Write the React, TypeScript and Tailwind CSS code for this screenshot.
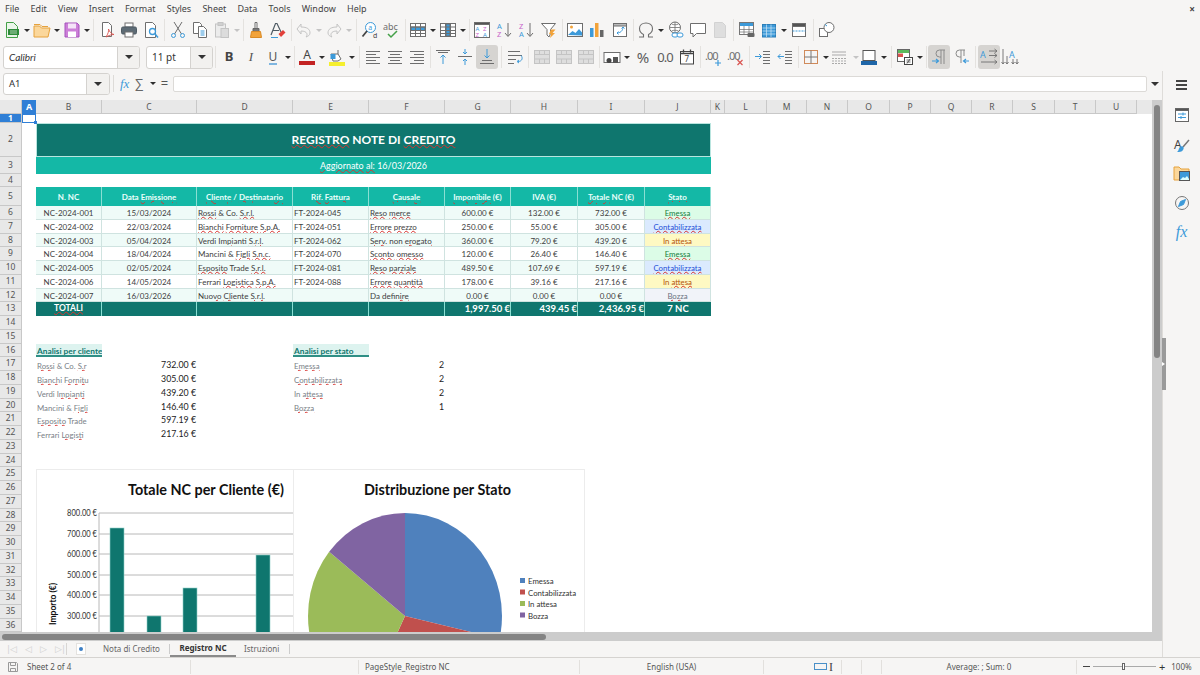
import type { ReactNode } from "react";

const GRAY = "#6e6e6e";
const BLUE = "#3d9ad9";
const LIGHT = "#c4c4c4";

function Ic({ children }: { children: ReactNode }) {
  return (
    <svg width="18" height="18" viewBox="0 0 18 18" fill="none" stroke={GRAY} strokeWidth="1">
      {children}
    </svg>
  );
}

function Btn({ children, active }: { children: ReactNode; active?: boolean }) {
  return (
    <div
      className={`flex h-[24px] w-[22px] shrink-0 items-center justify-center rounded-[3px] ${active ? "bg-[#d6d4d1]" : ""}`}
    >
      {children}
    </div>
  );
}

function Arrow({ light }: { light?: boolean }) {
  return (
    <div className="flex w-[8px] shrink-0 items-center justify-center">
      <div
        className={`h-0 w-0 border-x-[3px] border-t-[3px] border-x-transparent ${light ? "border-t-[#c4c4c4]" : "border-t-[#2e2e2e]"}`}
      />
    </div>
  );
}

function Sep({ className }: { className: string }) {
  return (
    <div className={`flex h-[22px] shrink-0 justify-center ${className}`}>
      <div className="h-full w-px bg-[#e4e2df]" />
    </div>
  );
}

// little horizontal line stacks used by the align + indent icons
function Lines({ rows, x = 2 }: { rows: [number, number][]; x?: number }) {
  return (
    <>
      {rows.map(([y, w]) => (
        <line key={y} x1={x} x2={x + w} y1={y + 0.5} y2={y + 0.5} />
      ))}
    </>
  );
}

function TableIcon({ fill, rowBand }: { fill?: string; rowBand?: boolean }) {
  return (
    <Ic>
      <rect x="1.5" y="2.5" width="15" height="13" fill="#fff" />
      {rowBand ? <rect x="2" y="6" width="14" height="3.5" fill={BLUE} /> : <rect x="7" y="3" width="4" height="12" fill={fill ?? BLUE} />}
      <path d="M1.5 6h15M1.5 9.500h15M1.500 12.500h15M6.500 2.500v13M11.500 2.500v13" />
    </Ic>
  );
}

function Toolbar1() {
  return (
    <div className="flex h-[26px] shrink-0 items-center pl-px">
      <Btn>
        <Ic>
          <path d="M3.500 1.500h7l4 4v11h-11z" fill="#eaf6ea" stroke="#43a047" />
          <rect x="5" y="8" width="11" height="6" fill="#2e8b3a" stroke="none" />
          <path d="M7 10h7M7 12h7" stroke="#fff" strokeWidth=".6" />
        </Ic>
      </Btn>
      <Arrow />
      <Btn>
        <Ic>
          <path d="M1 5h5.500l2 2h8.500l-2 9h-14z" fill="#fbd79b" stroke="#e6a23c" />
          <path d="M1 3.500h6l2 2h6" stroke="#e6a23c" />
        </Ic>
      </Btn>
      <Arrow />
      <Btn>
        <Ic>
          <path d="M2 2h12l2 2v12h-14z" fill="#cc7fd8" stroke="#a652bd" />
          <rect x="5" y="2.500" width="8" height="5" fill="#f5e4f8" stroke="none" />
          <rect x="5" y="10.500" width="8" height="5.500" fill="#fff" stroke="none" />
        </Ic>
      </Btn>
      <Arrow />
      <Sep className="w-[5px]" />
      <Btn>
        <Ic>
          <path d="M4.500 1.500h6l3 3v11h-9z" fill="#fff" />
          <path d="M8 16c2-3 3-6 2.500-8 1 3 3 5 5.500 5.500-3 0-5 1-8 2.500z" stroke="#d9534f" strokeWidth=".9" />
        </Ic>
      </Btn>
      <Btn>
        <Ic>
          <rect x="5" y="2" width="8" height="4" fill="#fff" />
          <rect x="1.500" y="6" width="15" height="7" rx="1.500" fill="#5d6b75" stroke="#4f5b64" />
          <rect x="5" y="11" width="8" height="5" fill="#fff" />
        </Ic>
      </Btn>
      <Btn>
        <Ic>
          <path d="M3.500 1.500h7l3 3v12h-10z" fill="#fff" />
          <circle cx="10.500" cy="10.500" r="3" stroke={BLUE} strokeWidth="1.300" />
          <path d="M13 13l3 3.500" stroke={BLUE} strokeWidth="1.500" />
        </Ic>
      </Btn>
      <Sep className="w-[5px]" />
      <Btn>
        <Ic>
          <path d="M5 1l7.500 12M13 1l-7.500 12" />
          <circle cx="4.500" cy="14.500" r="2" stroke={BLUE} />
          <circle cx="13.500" cy="14.500" r="2" stroke={BLUE} />
        </Ic>
      </Btn>
      <Btn>
        <Ic>
          <path d="M2.500 1.500h6l2 2v9h-8z" fill="#fff" />
          <path d="M7.500 5.500h5l3 3v8h-8z" fill="#fff" />
          <path d="M9.500 10h4M9.500 12h4M9.500 14h4" stroke={BLUE} />
        </Ic>
      </Btn>
      <Btn>
        <Ic>
          <rect x="2.500" y="3" width="10" height="13" fill="#ececec" stroke={LIGHT} />
          <rect x="8" y="7.500" width="7.500" height="9" fill="#dcdcdc" stroke={LIGHT} />
          <rect x="5" y="1.500" width="5" height="3" fill="#d0d0d0" stroke={LIGHT} />
        </Ic>
      </Btn>
      <Arrow light />
      <Sep className="w-[4px]" />
      <Btn>
        <Ic>
          <path d="M8 1.500h2v6H8z" fill="#fff" />
          <path d="M6 7.500h6v3H6z" fill="#777" stroke="#666" />
          <path d="M4.500 10.500h9l1 6h-11z" fill="#f2a33a" stroke="#d98a25" />
        </Ic>
      </Btn>
      <Btn>
        <Ic>
          <path d="M2 14L6.500 2.500h1.500L12 11M4 9.500h6" stroke="#4f5b64" strokeWidth="1.200" />
          <path d="M9.500 13l4.500-4 2.500 2.500-4.500 4.500z" fill="#e2403a" stroke="none" />
          <path d="M2 16.500h7" stroke={BLUE} />
        </Ic>
      </Btn>
      <Sep className="w-[4px]" />
      <Btn>
        <Ic>
          <path d="M2 8l4-5v3c6 0 9 2 9 6 0 2-2 3.500-4 4 2-2 1.500-6-5-6v3z" stroke={LIGHT} />
        </Ic>
      </Btn>
      <Arrow light />
      <Btn>
        <Ic>
          <path d="M16 8l-4-5v3c-6 0-9 2-9 6 0 2 2 3.500 4 4-2-2-1.500-6 5-6v3z" stroke={LIGHT} />
        </Ic>
      </Btn>
      <Arrow light />
      <Sep className="w-[6px]" />
      <Btn>
        <Ic>
          <circle cx="9.500" cy="6.500" r="5" fill="#fff" stroke={BLUE} />
          <path d="M6 10l-4.500 5.500" stroke="#444" strokeWidth="1.800" />
          <text x="7.300" y="8.500" fontSize="7" fill={BLUE} stroke="none" fontFamily="Noto Sans">a</text>
          <text x="12" y="17" fontSize="7" fill="#444" stroke="none" fontFamily="Noto Sans">d</text>
        </Ic>
      </Btn>
      <Btn>
        <Ic>
          <text x="0" y="9" fontSize="9" fill={GRAY} stroke="none" fontFamily="Noto Sans">abc</text>
          <path d="M5 13l3 3 6-6" stroke="#43a047" strokeWidth="1.500" />
        </Ic>
      </Btn>
      <Sep className="w-[4px]" />
      <Btn><TableIcon rowBand /></Btn>
      <Arrow />
      <Btn><TableIcon /></Btn>
      <Arrow />
      <Sep className="w-[4px]" />
      <Btn>
        <Ic>
          <rect x="1.500" y="1.500" width="15" height="15" fill="#fff" />
          <rect x="1.500" y="1.500" width="15" height="2" fill="#555" />
          <text x="2.500" y="10" fontSize="6" fill={BLUE} stroke="none" fontFamily="Noto Sans">A</text>
          <text x="10" y="10" fontSize="6" fill="#c763c9" stroke="none" fontFamily="Noto Sans">Z</text>
          <text x="2.500" y="16" fontSize="6" fill="#c763c9" stroke="none" fontFamily="Noto Sans">Z</text>
          <text x="10" y="16" fontSize="6" fill={BLUE} stroke="none" fontFamily="Noto Sans">A</text>
        </Ic>
      </Btn>
      <Btn>
        <Ic>
          <text x="2" y="8" fontSize="7.500" fill={BLUE} stroke="none" fontFamily="Noto Sans">A</text>
          <text x="2" y="16" fontSize="7.500" fill="#c763c9" stroke="none" fontFamily="Noto Sans">Z</text>
          <path d="M13 2v13M10 12l3 3.500 3-3.500" />
        </Ic>
      </Btn>
      <Btn>
        <Ic>
          <text x="2" y="8" fontSize="7.500" fill="#c763c9" stroke="none" fontFamily="Noto Sans">Z</text>
          <text x="2" y="16" fontSize="7.500" fill={BLUE} stroke="none" fontFamily="Noto Sans">A</text>
          <path d="M13 2v13M10 12l3 3.500 3-3.500" />
        </Ic>
      </Btn>
      <div className="w-px" />
      <Btn>
        <Ic>
          <path d="M1.500 2.500h14l-5 6v4l-1.500 3.500-2-2v-5.500z" fill="#fff" />
          <path d="M11 8.500h4.500l-3 3.500h2.500l-5 5 1-4h-2z" fill="#f2a33a" stroke="none" />
        </Ic>
      </Btn>
      <Sep className="w-[4px]" />
      <Btn>
        <Ic>
          <rect x="1.500" y="2.500" width="15" height="13" fill="#fff" />
          <circle cx="5.500" cy="6" r="1.500" fill="#f2a33a" stroke="none" />
          <path d="M2 14l4.500-4 3 2 3.500-4 3 3.500v3z" fill={BLUE} stroke="none" />
        </Ic>
      </Btn>
      <Btn>
        <Ic>
          <rect x="2" y="7" width="3.500" height="9" fill={BLUE} stroke="none" />
          <rect x="7" y="2" width="3.500" height="14" fill="#f2a33a" stroke="none" />
          <rect x="12" y="9" width="3.500" height="7" fill="#666" stroke="none" />
        </Ic>
      </Btn>
      <div className="w-px" />
      <Btn>
        <Ic>
          <rect x="2.500" y="2.500" width="13" height="13" fill="#fff" />
          <rect x="2.500" y="2.500" width="13" height="2.500" fill="#bbb" />
          <path d="M6 12c3 0 6-2 6-6M10.500 7.500L12 6l1.500 1.500M7.500 10.500L6 12l1.500 1.500" stroke={BLUE} />
        </Ic>
      </Btn>
      <Sep className="w-[4px]" />
      <Btn>
        <Ic>
          <path d="M2 16h4.500v-2.500C3.500 12 2.500 9.500 2.500 7.500 2.500 4 5.500 2 9 2s6.500 2 6.500 5.500c0 2-1 4.500-4 6V16H16" strokeWidth="1.100" />
        </Ic>
      </Btn>
      <Arrow />
      <Btn>
        <Ic>
          <circle cx="8" cy="6.500" r="5.500" fill="#fff" />
          <path d="M2.500 6.500h11M8 1v11M4.500 3c2 1 5 1 7 0M4.500 10c2-1 5-1 7 0" strokeWidth=".8" />
          <rect x="5" y="12" width="6" height="4" rx="2" stroke={BLUE} fill="#fff" />
          <rect x="10" y="12" width="6" height="4" rx="2" stroke={BLUE} fill="#fff" />
        </Ic>
      </Btn>
      <Btn>
        <Ic>
          <path d="M1.500 2.500h15v10h-9l-3.500 3.500v-3.500h-2.500z" fill="#fff" />
        </Ic>
      </Btn>
      <Btn>
        <Ic>
          <path d="M3.500 1.500h8l3 3v12h-11z" fill="#dedede" stroke="#d2d2d2" />
        </Ic>
      </Btn>
      <Sep className="w-[5px]" />
      <Btn>
        <Ic>
          <rect x="1.500" y="1.500" width="14" height="12" fill="#fff" stroke="#777" />
          <rect x="2" y="2" width="13" height="3" fill={BLUE} stroke="none" />
          <path d="M1.500 8.500h14M1.500 11h14M6 5v8M11 5v8" strokeWidth=".7" />
          <rect x="9.500" y="12" width="7" height="4" rx="1" fill="#666" stroke="none" />
        </Ic>
      </Btn>
      <Btn>
        <Ic>
          <rect x="2.500" y="3.500" width="13" height="12.500" fill={BLUE} stroke="#2c7fb8" />
          <path d="M2.500 7h13M2.500 10h13M2.500 13h13M6.500 3.500V16M11 3.500V16" stroke="#cfe6f6" strokeWidth=".7" />
        </Ic>
      </Btn>
      <Arrow />
      <Btn>
        <Ic>
          <rect x="2.500" y="2.500" width="13" height="13" fill="#fff" />
          <rect x="2.500" y="2.500" width="13" height="3" fill="#555" />
          <path d="M2.500 10h13" stroke={BLUE} strokeDasharray="2 1" />
        </Ic>
      </Btn>
      <Sep className="w-[6px]" />
      <Btn>
        <Ic>
          <rect x="1.500" y="7.500" width="8" height="8" fill="#fff" />
          <circle cx="11" cy="6.500" r="5" fill="#fff" />
          <path d="M7 3.500l2 1.500" stroke={BLUE} />
        </Ic>
      </Btn>
    </div>
  );
}

function ComboBox({ text, boxClass, italic }: { text: string; boxClass: string; italic?: boolean }) {
  return (
    <div className={`flex h-[23px] shrink-0 overflow-hidden rounded-[3px] border border-[#d4d2cf] bg-white ${boxClass}`}>
      <div
        className={`flex-1 pl-[5px] text-[10px] leading-[21px] text-[#333] ${italic ? "font-['Lato',sans-serif] italic" : ""}`}
      >
        {text}
      </div>
      <div className="flex w-[22px] items-center justify-center border-l border-[#d4d2cf] bg-[#f2f1ef]">
        <div className="h-0 w-0 border-x-[4px] border-t-[4px] border-x-transparent border-t-[#333]" />
      </div>
    </div>
  );
}

function Toolbar2() {
  return (
    <div className="flex h-[28px] shrink-0 items-center pl-[3px]">
      <ComboBox text="Calibri" boxClass="w-[137px]" italic />
      <div className="w-[6px]" />
      <ComboBox text="11 pt" boxClass="w-[67px]" />
      <Sep className="w-[5px]" />
      <Btn><span className="text-[13px] font-bold text-[#444]">B</span></Btn>
      <Btn><span className="font-['Liberation_Serif',serif] text-[13px] italic text-[#555]">I</span></Btn>
      <Btn>
        <span className="border-b-2 border-[#7fb6e0] text-[12px] leading-[13px] text-[#555]">U</span>
      </Btn>
      <Arrow />
      <Sep className="w-[4px]" />
      <Btn>
        <div className="flex flex-col items-center">
          <span className="text-[12px] leading-[12px] text-[#444]">A</span>
          <div className="h-[4px] w-[16px] bg-[#c32323]" />
        </div>
      </Btn>
      <Arrow />
      <Btn>
        <Ic>
          <rect x="1" y="14" width="16" height="4" fill="#f5ef2e" stroke="none" />
          <path d="M3 6h7l3 5-3 2H5z" fill="#fff" />
          <rect x="2.500" y="6" width="5" height="5" fill={BLUE} stroke="none" />
          <path d="M10 2v4" />
        </Ic>
      </Btn>
      <Arrow />
      <Sep className="w-[6px]" />
      <Btn><Ic><Lines rows={[[3, 14], [6, 10], [9, 14], [12, 10], [15, 14]]} /></Ic></Btn>
      <Btn><Ic><Lines rows={[[3, 14], [9, 14], [15, 14]]} /><Lines x={4} rows={[[6, 10], [12, 10]]} /></Ic></Btn>
      <Btn><Ic><Lines rows={[[3, 14], [9, 14], [15, 14]]} /><Lines x={6} rows={[[6, 10], [12, 10]]} /></Ic></Btn>
      <Sep className="w-[4px]" />
      <Btn>
        <Ic>
          <Lines rows={[[2, 14]]} />
          <Lines x={4} rows={[[4, 10]]} />
          <path d="M9 16V7M6.500 9.500L9 7l2.500 2.500" stroke={BLUE} />
        </Ic>
      </Btn>
      <Btn>
        <Ic>
          <Lines rows={[[8, 14]]} />
          <path d="M9 1v5M7 4l2 2 2-2M9 17v-6M7 13l2-2 2 2" stroke={BLUE} />
        </Ic>
      </Btn>
      <Btn active>
        <Ic>
          <Lines x={4} rows={[[12, 10]]} />
          <Lines rows={[[15, 14]]} />
          <path d="M9 1v9M6.500 7.500L9 10l2.500-2.500" stroke={BLUE} />
        </Ic>
      </Btn>
      <Sep className="w-[6px]" />
      <Btn>
        <Ic>
          <Lines rows={[[3, 12], [7, 14], [11, 8], [15, 6]]} />
          <path d="M15 7.500c2 2 1.500 6-3 6M13 12l-2 1.500 2 1.500" stroke={BLUE} />
        </Ic>
      </Btn>
      <Sep className="w-[5px]" />
      {[0, 1, 2].map((k) => (
        <Btn key={k}>
          <Ic>
            <rect x="1.500" y="2.500" width="15" height="13" fill="#dedede" stroke={LIGHT} />
            <path d="M1.500 6.500h15M1.500 11h15M6.500 2.500v4M11.500 2.500v4M6.500 11v4.500M11.500 11v4.500" stroke={LIGHT} />
          </Ic>
        </Btn>
      ))}
      <Sep className="w-[4px]" />
      <Btn>
        <Ic>
          <rect x="1" y="4.500" width="16" height="10" fill="#fff" />
          <circle cx="6" cy="12.500" r="2.500" fill="#444" stroke="none" />
          <rect x="10" y="9" width="5" height="6" fill="#555" stroke="none" />
        </Ic>
      </Btn>
      <Arrow />
      <div className="w-px" />
      <Btn><span className="text-[15px] leading-none text-[#5c5c5c]">%</span></Btn>
      <Btn><span className="text-[13px] leading-none tracking-[-1px] text-[#5c5c5c]">0.0</span></Btn>
      <Btn>
        <Ic>
          <rect x="2.500" y="3.500" width="13" height="12.500" fill="#fff" stroke="#444" />
          <path d="M2.500 5.500h13M5.500 1.500v3M12.500 1.500v3" stroke="#444" strokeWidth="1.300" />
          <text x="6.500" y="14" fontSize="8" fill="#444" stroke="none" fontFamily="Noto Sans">7</text>
        </Ic>
      </Btn>
      <Sep className="w-[5px]" />
      <Btn>
        <Ic>
          <text x="0" y="12" fontSize="11" letterSpacing="-1" fill={GRAY} stroke="none" fontFamily="Noto Sans">.00</text>
          <path d="M13 12v6M10 15h6" stroke={BLUE} strokeWidth="1.200" />
        </Ic>
      </Btn>
      <Btn>
        <Ic>
          <text x="0" y="12" fontSize="11" letterSpacing="-1" fill={GRAY} stroke="none" fontFamily="Noto Sans">.00</text>
          <path d="M10.500 12l5 5M15.500 12l-5 5" stroke="#d9534f" strokeWidth="1.200" />
        </Ic>
      </Btn>
      <Sep className="w-[5px]" />
      <Btn>
        <Ic>
          <Lines x={9} rows={[[3, 7], [6, 7], [9, 7], [12, 7], [15, 7]]} />
          <path d="M1 8.500h6M5 6l2.500 2.500L5 11" stroke={BLUE} />
        </Ic>
      </Btn>
      <Btn>
        <Ic>
          <Lines x={9} rows={[[3, 7], [6, 7], [9, 7], [12, 7], [15, 7]]} />
          <path d="M8 8.500H2M4.500 6L2 8.500 4.500 11" stroke={BLUE} />
        </Ic>
      </Btn>
      <Sep className="w-[4px]" />
      <Btn>
        <Ic>
          <rect x="2.500" y="2.500" width="13" height="13" stroke="#d08a5a" />
          <path d="M9 2.500v13M2.500 9h13" stroke="#777" />
        </Ic>
      </Btn>
      <Arrow />
      <div className="ml-[-2px]" />
      <Btn>
        <Ic>
          <path d="M2 4h14M2 7h14" stroke="#aaa" strokeWidth="1.200" />
          <path d="M2 10.500h14M2 13h14M2 15.500h14" stroke="#aaa" strokeDasharray="2 1" />
        </Ic>
      </Btn>
      <div className="w-[2px]" />
      <Arrow light />
      <div className="ml-[-2px]" />
      <Btn>
        <Ic>
          <rect x="3" y="2.500" width="12" height="10" fill="#fff" stroke="#555" />
          <rect x="1" y="13" width="16" height="4" fill="#1f66a8" stroke="none" />
        </Ic>
      </Btn>
      <Arrow />
      <Sep className="w-[6px]" />
      <Btn>
        <Ic>
          <rect x="1.500" y="1.500" width="12" height="12" fill="#fff" stroke="#666" />
          <rect x="2" y="2" width="11" height="3" fill="#5cb85c" stroke="none" />
          <rect x="2" y="5.500" width="5" height="3.500" fill="#d9534f" stroke="none" />
          <rect x="8.500" y="9.500" width="8" height="7" fill="#fff" stroke="#444" />
          <path d="M10.500 12h4M10.500 14h4M14 11l-3 4.500" strokeWidth=".8" stroke="#444" />
        </Ic>
      </Btn>
      <Arrow />
      <Sep className="w-[4px]" />
      <Btn active>
        <Ic>
          <path d="M15 2H9.500a3.500 3.500 0 0 0 0 7H11M11 2v14M14 2v14" stroke="#8a8a8a" />
          <path d="M2 13h6M6 11l2.500 2L6 15" stroke={BLUE} strokeWidth="1.200" />
        </Ic>
      </Btn>
      <Btn>
        <Ic>
          <path d="M13 2H7.500a3.500 3.500 0 0 0 0 7H9M9 2v13M12 2v6" stroke="#8a8a8a" />
          <path d="M17 13h-5M14 11l-2.500 2 2.500 2" stroke={BLUE} strokeWidth="1.200" />
        </Ic>
      </Btn>
      <Sep className="w-[6px]" />
      <Btn active>
        <Ic>
          <text x="0" y="10" fontSize="9" fill={BLUE} stroke="none" fontFamily="Noto Sans">A</text>
          <path d="M9 3h8M14.500 1l2.500 2-2.500 2M9 7.500h8M14.500 5.500l2.500 2-2.500 2M1 14h16M14.500 12l2.500 2-2.500 2" strokeWidth=".9" />
        </Ic>
      </Btn>
      <div className="ml-[-1px]" />
      <Btn>
        <Ic>
          <text x="8" y="10" fontSize="9" fill={BLUE} stroke="none" fontFamily="Noto Sans">A</text>
          <path d="M2 1v15M.5 14L2 16l1.500-2M6 8v8M4.500 14L6 16l1.500-2M12 11v5M10.500 14l1.500 2 1.500-2M16 11v5M14.500 14l1.500 2 1.500-2" strokeWidth=".9" />
        </Ic>
      </Btn>
    </div>
  );
}

function FormulaBar() {
  return (
    <div className="flex h-[26px] shrink-0 items-start">
      <div className="ml-[3px] mt-[2px] flex h-[22px] w-[107px] overflow-hidden rounded-[3px] border border-[#d4d2cf] bg-white">
        <div className="flex-1 pl-[5px] text-[9.500px] leading-[20px] text-[#333]">A1</div>
        <div className="flex w-[23px] items-center justify-center border-l border-[#d4d2cf] bg-[#f2f1ef]">
          <div className="h-0 w-0 border-x-[4px] border-t-[4px] border-x-transparent border-t-[#333]" />
        </div>
      </div>
      <div className="ml-[3px] mt-[4px] h-[17px] w-px bg-[#dddbd8]" />
      <div className="ml-[6px] mt-[3px] font-['Liberation_Serif',serif] text-[13px] italic leading-[19px] text-[#3d9ad9]">
        fx
      </div>
      <div className="ml-[5px] mt-[3px] text-[13px] leading-[19px] text-[#666]">∑</div>
      <div className="ml-[5px] mt-[11px]">
        <Arrow />
      </div>
      <div className="ml-[4px] mt-[3px] text-[13px] leading-[19px] text-[#555]">=</div>
      <div className="ml-[5px] mt-[5px] h-[16px] flex-1 rounded-[2px] border border-[#dcdad7] bg-white" />
      <div className="mt-[11px] flex w-[15px] justify-center">
        <div className="h-0 w-0 border-x-[4px] border-t-[4px] border-x-transparent border-t-[#333]" />
      </div>
    </div>
  );
}

const COLS = "grid grid-cols-[14px_66px_95px_96px_76px_76px_66px_67px_67px_66px_14px_42px_40px_41px_42px_41px_41px_41px_42px_41px_41px]";

const columnLabels = "A B C D E F G H I J K L M N O P Q R S T U".split(" ");

function ColumnHeader() {
  return (
    <div className="flex h-[14px] shrink-0 bg-[#e8e8e8]">
      <div className="w-[22px] shrink-0 border-b border-r border-[#c8c8c8]" />
      <div className={`${COLS} min-w-0 flex-1 overflow-hidden`}>
        {columnLabels.map((c) => (
          <div
            key={c}
            className={
              c === "A"
                ? "bg-[#2f7fd6] text-center text-[9px] font-bold leading-[14px] text-white"
                : "border-b border-r border-[#c8c8c8] text-center text-[8.500px] leading-[13px] text-[#555]"
            }
          >
            {c}
          </div>
        ))}
      </div>
    </div>
  );
}

const rowHeights: Record<number, string> = {
  1: "h-[9px]",
  2: "h-[34px]",
  3: "h-[17px]",
  4: "h-[13px]",
  5: "h-[19px]",
};

function RowHeader() {
  const rows = Array.from({ length: 36 }, (_, i) => i + 1);
  return (
    <div className="w-[22px] shrink-0">
      {rows.map((n) => (
        <div
          key={n}
          className={`flex items-center justify-center border-b border-r border-[#c8c8c8] text-[8.500px] text-[#555] ${rowHeights[n] ?? "h-[13.750px]"} ${n === 1 ? "bg-[#2f7fd6] font-bold text-white" : "bg-[#e8e8e8]"}`}
        >
          {n}
        </div>
      ))}
    </div>
  );
}

// wavy red line of the spell checker
function S({ children }: { children: ReactNode }) {
  return (
    <span className="underline decoration-[#d8332f] decoration-wavy decoration-1 underline-offset-[0px]">
      {children}
    </span>
  );
}

const headers: ReactNode[] = [
  "N. NC",
  <>Data <S>Emissione</S></>,
  <><S>Cliente</S> / <S>Destinatario</S></>,
  <><S>Rif.</S> <S>Fattura</S></>,
  <S>Causale</S>,
  <><S>Imponibile</S> (€)</>,
  "IVA (€)",
  <><S>Totale</S> NC (€)</>,
  <S>Stato</S>,
];

type Stato = "Emessa" | "Contabilizzata" | "In attesa" | "Bozza";

const statoClass: Record<Stato, string> = {
  Emessa: "bg-[#dcfce7] text-[#15803d]",
  Contabilizzata: "bg-[#dbeafe] text-[#1d4ed8]",
  "In attesa": "bg-[#fef9c3] text-[#b45309]",
  Bozza: "bg-[#f1f3f9] text-[#6b7280]",
};

const statoLabel: Record<Stato, ReactNode> = {
  Emessa: <S>Emessa</S>,
  Contabilizzata: <S>Contabilizzata</S>,
  "In attesa": <>In <S>attesa</S></>,
  Bozza: <S>Bozza</S>,
};

const notes: {
  id: string;
  date: string;
  client: ReactNode;
  ref: string;
  reason: ReactNode;
  net: string;
  vat: string;
  total: string;
  stato: Stato;
}[] = [
  { id: "NC-2024-001", date: "15/03/2024", client: <><S>Rossi</S> &amp; Co. <S>S.r.l.</S></>, ref: "FT-2024-045", reason: <><S>Reso</S> <S>merce</S></>, net: "600.00 €", vat: "132.00 €", total: "732.00 €", stato: "Emessa" },
  { id: "NC-2024-002", date: "22/03/2024", client: <><S>Bianchi</S> <S>Forniture</S> <S>S.p.A.</S></>, ref: "FT-2024-051", reason: <><S>Errore</S> <S>prezzo</S></>, net: "250.00 €", vat: "55.00 €", total: "305.00 €", stato: "Contabilizzata" },
  { id: "NC-2024-003", date: "05/04/2024", client: <>Verdi <S>Impianti</S> <S>S.r.l.</S></>, ref: "FT-2024-062", reason: <><S>Serv.</S> non <S>erogato</S></>, net: "360.00 €", vat: "79.20 €", total: "439.20 €", stato: "In attesa" },
  { id: "NC-2024-004", date: "18/04/2024", client: <>Mancini &amp; <S>Figli</S> <S>S.n.c.</S></>, ref: "FT-2024-070", reason: <><S>Sconto</S> <S>omesso</S></>, net: "120.00 €", vat: "26.40 €", total: "146.40 €", stato: "Emessa" },
  { id: "NC-2024-005", date: "02/05/2024", client: <><S>Esposito</S> Trade <S>S.r.l.</S></>, ref: "FT-2024-081", reason: <><S>Reso</S> <S>parziale</S></>, net: "489.50 €", vat: "107.69 €", total: "597.19 €", stato: "Contabilizzata" },
  { id: "NC-2024-006", date: "14/05/2024", client: <>Ferrari <S>Logistica</S> <S>S.p.A.</S></>, ref: "FT-2024-088", reason: <><S>Errore</S> <S>quantità</S></>, net: "178.00 €", vat: "39.16 €", total: "217.16 €", stato: "In attesa" },
  { id: "NC-2024-007", date: "16/03/2026", client: <><S>Nuovo</S> <S>Cliente</S> <S>S.r.l.</S></>, ref: "", reason: <>Da <S>definire</S></>, net: "0.00 €", vat: "0.00 €", total: "0.00 €", stato: "Bozza" },
];

function NoteRow({ note, index }: { note: (typeof notes)[number]; index: number }) {
  const bg = index % 2 === 0 ? "bg-[#effbf8]" : "bg-white";
  const cell = `truncate border-b border-r border-[#cfe3e0] px-px pt-px text-[8px] leading-[13px] text-[#404040] ${bg}`;
  return (
    <div className={`${COLS} h-[13.750px]`}>
      <div />
      <div className={`${cell} text-center text-[7.300px]`}>{note.id}</div>
      <div className={`${cell} text-center text-[7.500px]`}>{note.date}</div>
      <div className={cell}>{note.client}</div>
      <div className={`${cell} text-[7.200px]`}>{note.ref}</div>
      <div className={cell}>{note.reason}</div>
      <div className={`${cell} text-center text-[7.500px]`}>{note.net}</div>
      <div className={`${cell} text-center text-[7.500px]`}>{note.vat}</div>
      <div className={`${cell} text-center text-[7.500px]`}>{note.total}</div>
      <div
        className={`truncate border-b border-r border-[#cfe3e0] pt-px text-center text-[7.800px] leading-[13px] ${statoClass[note.stato]}`}
      >
        {statoLabel[note.stato]}
      </div>
    </div>
  );
}

const clientSummary: [ReactNode, string][] = [
  [<><S>Rossi</S> &amp; Co. <S>S.r</S></>, "732.00 €"],
  [<><S>Bianchi</S> <S>Fornitu</S></>, "305.00 €"],
  [<>Verdi <S>Impianti</S></>, "439.20 €"],
  [<>Mancini &amp; <S>Figli</S></>, "146.40 €"],
  [<><S>Esposito</S> Trade</>, "597.19 €"],
  [<>Ferrari <S>Logisti</S></>, "217.16 €"],
];

const statusSummary: [ReactNode, string][] = [
  [<S>Emessa</S>, "2"],
  [<S>Contabilizzata</S>, "2"],
  [<>In <S>attesa</S></>, "2"],
  [<S>Bozza</S>, "1"],
];

function SummaryRow({ row }: { row: number }) {
  const client = clientSummary[row];
  const status = statusSummary[row];
  const label = "truncate pl-px pt-[3px] text-[7.800px] leading-[13px] text-[#7a7f87]";
  const value = "pr-px pt-px text-right text-[8.800px] leading-[13px] text-[#222]";
  return (
    <div className={`${COLS} h-[13.750px]`}>
      <div />
      <div className={label}>{client?.[0]}</div>
      <div className={value}>{client?.[1]}</div>
      <div />
      <div className={label}>{status?.[0]}</div>
      <div className={value}>{status?.[1]}</div>
    </div>
  );
}

const chartFont = "font-['Lato',sans-serif]";

function Charts() {
  const ticks: [number, string][] = [
    [44, "800.00 €"],
    [65, "700.00 €"],
    [85, "600.00 €"],
    [106, "500.00 €"],
    [126, "400.00 €"],
    [147, "300.00 €"],
  ];
  const bars = [
    [74, 59],
    [111, 147],
    [147, 119],
    [220, 86],
  ];
  // pie is a bit taller than wide in the picture, 2/2/2/1 of 7
  const slice = (from: number, to: number) => {
    const pt = (deg: number) => {
      const a = (deg * Math.PI) / 180;
      return `${369 + 97 * Math.sin(a)} ${147 - 103 * Math.cos(a)}`;
    };
    return `M369 147L${pt(from)}A97 103 0 0 1 ${pt(to)}Z`;
  };
  const legend: [string, string][] = [
    ["#4f81bd", "Emessa"],
    ["#c0504d", "Contabilizzata"],
    ["#9bbb59", "In attesa"],
    ["#8064a2", "Bozza"],
  ];
  return (
    <svg
      className={`absolute left-[14px] top-[355px] ${chartFont}`}
      width="549"
      height="164"
      viewBox="0 0 549 164"
    >
      <rect x=".5" y=".5" width="548" height="190" fill="#fff" stroke="#ececec" />
      <line x1="257.500" x2="257.500" y1="0" y2="164" stroke="#ececec" />
      <text x="92" y="26" fontSize="16" fontWeight="700" fill="#111" textLength="156" lengthAdjust="spacingAndGlyphs">
        Totale NC per Cliente (€)
      </text>
      {ticks.map(([y, label]) => (
        <g key={label}>
          <line x1="63" x2="257" y1={y} y2={y} stroke="#b8b8b8" />
          <text x="61" y={y + 3} textAnchor="end" fontSize="8.500" fill="#333" textLength="30" lengthAdjust="spacingAndGlyphs">
            {label}
          </text>
        </g>
      ))}
      <line x1="63" x2="63" y1="44" y2="164" stroke="#b8b8b8" />
      {bars.map(([x, y]) => (
        <rect key={x} x={x} y={y} width="14" height={164 - y} fill="#0f766e" stroke="#8fd0c8" strokeWidth=".6" />
      ))}
      <text transform="translate(20 156) rotate(-90)" fontSize="8.500" fontWeight="700" fill="#111">
        Importo (€)
      </text>
      <text x="328" y="26" fontSize="16" fontWeight="700" fill="#111" textLength="147" lengthAdjust="spacingAndGlyphs">
        Distribuzione per Stato
      </text>
      <path d={slice(0, 102.857)} fill="#4f81bd" />
      <path d={slice(102.857, 205.714)} fill="#c0504d" />
      <path d={slice(205.714, 308.571)} fill="#9bbb59" />
      <path d={slice(308.571, 360)} fill="#8064a2" />
      {legend.map(([color, label], i) => (
        <g key={label}>
          <rect x="484" y={109 + i * 11.500} width="5" height="5" fill={color} />
          <text x="492" y={115 + i * 11.500} fontSize="7.800" fill="#333">
            {label}
          </text>
        </g>
      ))}
    </svg>
  );
}

function SheetBody() {
  return (
    <div className="relative min-w-0 flex-1 overflow-hidden bg-white font-['Lato',sans-serif]">
      <div className="h-[9px]" />
      {/* selected A1 */}
      <div className="absolute left-0 top-0 h-[9px] w-[14px] border border-[#2f7fd6]" />
      <div className="absolute left-[12px] top-[7px] h-[3px] w-[3px] bg-[#2f7fd6]" />
      <div className="ml-[14px] flex h-[34px] w-[675px] items-center justify-center border border-[#b9e5df] bg-[#0f766e] text-[12px] font-bold text-white">
        <span>
          <S>REGISTRO</S> NOTE DI <S>CREDITO</S>
        </span>
      </div>
      <div className="ml-[14px] flex h-[17px] w-[675px] items-center justify-center bg-[#14b8a6] text-[9px] text-white">
        <span>
          <S>Aggiornato</S> <S>al:</S> 16/03/2026
        </span>
      </div>
      <div className="h-[13px]" />
      <div className={`${COLS} h-[19px]`}>
        <div />
        {headers.map((h, i) => (
          <div
            key={i}
            className="flex items-center justify-center border-r border-[#8adfd3] bg-[#14b8a6] text-[8px] font-bold text-[#eafffb]"
          >
            <span>{h}</span>
          </div>
        ))}
      </div>
      {notes.map((note, i) => (
        <NoteRow key={note.id} note={note} index={i} />
      ))}
      <div className={`${COLS} h-[13.750px] text-white`}>
        <div />
        <div className="border-r border-[#8adfd3] bg-[#0f766e] text-center text-[8.500px] font-bold leading-[13px]">
          <S>TOTALI</S>
        </div>
        <div className="border-r border-[#8adfd3] bg-[#0f766e]" />
        <div className="border-r border-[#8adfd3] bg-[#0f766e]" />
        <div className="border-r border-[#8adfd3] bg-[#0f766e]" />
        <div className="border-r border-[#8adfd3] bg-[#0f766e]" />
        <div className="border-r border-[#8adfd3] bg-[#0f766e] text-right text-[9.500px] font-bold leading-[13px]">1,997.50 €</div>
        <div className="border-r border-[#8adfd3] bg-[#0f766e] text-right text-[9.500px] font-bold leading-[13px]">439.45 €</div>
        <div className="border-r border-[#8adfd3] bg-[#0f766e] text-right text-[9.500px] font-bold leading-[13px]">2,436.95 €</div>
        <div className="bg-[#0f766e] text-center text-[9.500px] font-bold leading-[13px]">7 NC</div>
      </div>
      <div className="h-[27.500px]" />
      <div className={`${COLS} h-[13.750px]`}>
        <div />
        <div className="overflow-hidden whitespace-nowrap border-b-2 border-[#2f8f85] bg-[#ddf3ef] pl-px pt-[2px] text-[8.300px] font-bold leading-[10px] text-[#0f766e]">
          <S>Analisi</S> per <S>cliente</S>
        </div>
        <div />
        <div />
        <div className="overflow-hidden whitespace-nowrap border-b-2 border-[#2f8f85] bg-[#ddf3ef] pl-px pt-[2px] text-[8.300px] font-bold leading-[10px] text-[#0f766e]">
          <S>Analisi</S> per <S>stato</S>
        </div>
      </div>
      {[0, 1, 2, 3, 4, 5].map((r) => (
        <SummaryRow key={r} row={r} />
      ))}
      <Charts />
    </div>
  );
}

function SheetArea() {
  return (
    <div className="relative flex min-w-0 flex-1 flex-col">
      <div className="h-[3px] shrink-0 bg-[#f6f5f4]" />
      <ColumnHeader />
      <div className="flex h-[518px] shrink-0">
        <RowHeader />
        <SheetBody />
      </div>
      {/* horizontal scrollbar */}
      <div className="flex h-[9px] shrink-0 items-center bg-[#cccccc]">
        <div className="ml-[2px] h-[6px] w-[544px] rounded-full bg-[#848484]" />
      </div>
      <TabBar />
      {/* vertical scrollbar */}
      <div className="absolute right-0 top-[3px] h-[538px] w-[10px] bg-[#cccccc]">
        <div className="ml-[2px] mt-[5px] h-[253px] w-[6px] rounded-full bg-[#848484]" />
      </div>
    </div>
  );
}

function TabBar() {
  return (
    <div className="flex h-[16px] shrink-0 items-center bg-[#f6f5f4] font-['Noto_Sans',sans-serif] text-[8px] text-[#666]">
      <div className="ml-[6px] flex h-[12px] w-[59px] items-center justify-between text-[9px] tracking-[-1px] text-[#d0d0d0]">
        <span>|◁</span>
        <span>◁</span>
        <span>▷</span>
        <span>▷|</span>
      </div>
      <div className="ml-[1px] h-[12px] w-px bg-[#d8d6d3]" />
      <div className="ml-[9px] flex h-[12px] w-[10px] items-center justify-center border border-[#e4e2df] bg-white">
        <div className="h-[4px] w-[4px] rounded-full bg-[#3d7fc4]" />
      </div>
      <div className="ml-[17px] w-[56px] whitespace-nowrap">Nota di Credito</div>
      <div className="ml-[10px] h-[10px] w-px bg-[#ccc]" />
      <div className="flex h-full w-[66px] items-center justify-center whitespace-nowrap border-b-2 border-[#8a8a8a] font-bold text-[#333]">
        Registro NC
      </div>
      <div className="ml-[8px] w-[35px] whitespace-nowrap">Istruzioni</div>
      <div className="ml-[10px] h-[10px] w-px bg-[#ccc]" />
    </div>
  );
}

function Sidebar() {
  return (
    <div className="relative flex w-[38px] shrink-0 flex-col items-center border-l border-[#dedcd9] bg-[#f6f5f4] pt-[7px]">
      <div className="flex h-[14px] flex-col justify-center gap-[2px]">
        <div className="h-[2px] w-[11px] bg-[#444]" />
        <div className="h-[2px] w-[11px] bg-[#444]" />
        <div className="h-[2px] w-[11px] bg-[#444]" />
      </div>
      <div className="mt-[8px] flex flex-col items-center">
        <div className="flex h-[29px] items-center">
          <svg width="16" height="16" viewBox="0 0 16 16" fill="#fff" stroke="#666">
            <rect x="1.500" y="1.500" width="13" height="13" />
            <rect x="1.500" y="1.500" width="13" height="2" fill="#555" />
            <path d="M4 7h8M4 10.500h8M9 5.500v3M7 9v3" stroke={BLUE} fill="none" />
          </svg>
        </div>
        <div className="flex h-[30px] items-center">
          <svg width="18" height="19" viewBox="0 0 18 19" fill="none">
            <text x="1" y="14" fontSize="12" fill="#444" fontFamily="Noto Sans">A</text>
            <path d="M16 5l-6 7" stroke="#777" strokeWidth="1.500" />
            <path d="M7 12c2-2 5 0 3 3-1 2-4 2-6 2 2-1 1-3 3-5z" fill={BLUE} />
          </svg>
        </div>
        <div className="flex h-[29px] items-center">
          <svg width="18" height="17" viewBox="0 0 18 17" fill="#fbd79b" stroke="#e6a23c">
            <path d="M1 2h5l2 2h8v11H1z" />
            <rect x="6.500" y="6.500" width="10" height="9" fill={BLUE} stroke="#555" />
            <path d="M7 15l3-3 2 1 2-2 2 3v1z" fill="#dff" stroke="none" />
          </svg>
        </div>
        <div className="flex h-[29px] items-center">
          <svg width="16" height="16" viewBox="0 0 16 16" fill="none" stroke="#777">
            <circle cx="8" cy="8" r="6.500" />
            <path d="M11.500 4.500L9.500 9.500 4.500 11.500 6.500 6.500z" fill={BLUE} stroke={BLUE} />
          </svg>
        </div>
        <div className="flex h-[29px] items-center font-['Liberation_Serif',serif] text-[16px] italic text-[#3d9ad9]">
          fx
        </div>
      </div>
      {/* deck grip */}
      <div className="absolute left-[-1px] top-[267px] flex h-[52px] w-[4px] items-center bg-[#9a9a9a]">
        <div className="h-0 w-0 border-y-[2px] border-l-[3px] border-y-transparent border-l-white" />
      </div>
    </div>
  );
}

function Divider({ className }: { className: string }) {
  return <div className={`h-[14px] shrink-0 border-r border-[#e2e0dd] ${className}`} />;
}

function StatusBar() {
  return (
    <div className="flex h-[18px] shrink-0 items-center border-t border-[#d5d3d0] bg-[#f6f5f4] text-[8px] text-[#555]">
      <div className="ml-[6px] flex w-[13px] justify-center">
        <svg width="12" height="12" viewBox="0 0 12 12" fill="none" stroke="#999">
          <path d="M1.500 1.500h8l1 1v8h-9z" />
          <path d="M3.500 1.500v3h5v-3M3.500 10.500v-3h5v3" />
        </svg>
      </div>
      <div className="ml-[8px] w-[163px] whitespace-nowrap">Sheet 2 of 4</div>
      <Divider className="w-0" />
      <div className="w-[167px]" />
      <Divider className="w-0" />
      <div className="w-[220px] pl-[6px] whitespace-nowrap">PageStyle_Registro NC</div>
      <Divider className="w-0" />
      <div className="w-[183px] text-center whitespace-nowrap">English (USA)</div>
      <Divider className="w-0" />
      <div className="w-[50px]" />
      <div className="flex w-[27px] items-center gap-[2px]">
        <div className="h-[7px] w-[13px] border border-[#4a90c8]" />
        <span className="font-['Liberation_Serif',serif] text-[12px] leading-none text-[#444]">I</span>
      </div>
      <Divider className="w-0" />
      <div className="w-[19px]" />
      <Divider className="w-0" />
      <div className="w-[19px]" />
      <Divider className="w-0" />
      <div className="w-[194px] text-center whitespace-nowrap">Average: ; Sum: 0</div>
      <Divider className="w-0" />
      <div className="ml-[6px] h-px w-[7px] bg-[#444]" />
      <div className="relative ml-[3px] h-px w-[63px] bg-[#aaa]">
        <div className="absolute left-[29px] top-[-3px] h-[7px] w-[3px] border border-[#666] bg-white" />
      </div>
      <div className="ml-[3px] text-[11px] leading-none text-[#333]">+</div>
      <div className="ml-[6px] whitespace-nowrap">100%</div>
    </div>
  );
}

export default function App() {
  return (
    <div className="flex h-[675px] w-[1200px] flex-col overflow-hidden bg-[#f6f5f4] font-['Noto_Sans',sans-serif]">
      <div className="flex h-[17px] shrink-0 items-center justify-between pl-[5px] pr-[5px] text-[9px] text-[#444]">
        <div className="flex gap-[11.200px]">
          {["File", "Edit", "View", "Insert", "Format", "Styles", "Sheet", "Data", "Tools", "Window", "Help"].map((m) => (
            <span key={m}>{m}</span>
          ))}
        </div>
        <span className="text-[10px] font-bold leading-none">×</span>
      </div>
      <Toolbar1 />
      <Toolbar2 />
      <div className="flex min-h-0 flex-1">
        <div className="flex min-w-0 flex-1 flex-col">
          <FormulaBar />
          <SheetArea />
        </div>
        <Sidebar />
      </div>
      <StatusBar />
    </div>
  );
}
